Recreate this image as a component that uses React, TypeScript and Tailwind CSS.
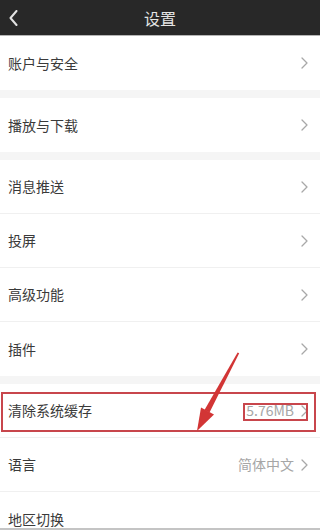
import React from 'react';

type Row = { label: string; value?: string; noArrow?: boolean };

const groups: Row[][] = [
  [{ label: '账户与安全' }],
  [{ label: '播放与下载' }],
  [{ label: '消息推送' }, { label: '投屏' }, { label: '高级功能' }, { label: '插件' }],
  [{ label: '清除系统缓存', value: '5.76MB' }, { label: '语言', value: '简体中文' }, { label: '地区切换', noArrow: true }],
];

const Chevron = () => (
  <svg width="7" height="12" viewBox="0 0 7 12" className="shrink-0">
    <path d="M1 1 L6 6 L1 11" fill="none" stroke="#a8a8a8" strokeWidth="1.3" strokeLinecap="round" strokeLinejoin="round" />
  </svg>
);

export default function App() {
  return (
    <div
      className="relative w-[320px] h-[530px] overflow-hidden bg-[#f5f5f5] border-b-2 border-[#c4c4c4]"
      style={{ fontFamily: '"Noto Sans CJK SC", "Noto Sans", sans-serif' }}
    >
      {/* Header */}
      <div className="relative h-9 bg-[#282828] border-b border-[#b5b5b5] flex items-center justify-center">
        <svg width="9" height="16" viewBox="0 0 9 16" className="absolute left-[9px] top-[10px]">
          <path d="M7.5 1 L1.5 8 L7.5 15" fill="none" stroke="#e2e2e2" strokeWidth="2" strokeLinecap="round" strokeLinejoin="round" />
        </svg>
        <span className="text-[16px] text-[#e4e4e4] leading-none">设置</span>
      </div>

      {groups.map((group, gi) => (
        <div key={gi} className={gi > 0 ? 'mt-2' : ''}>
          {group.map((row, ri) => (
            <div
              key={row.label}
              className={`relative h-[54px] bg-white flex items-center pl-2 pr-3 ${
                ri < group.length - 1 ? 'border-b border-[#f0f0f0]' : ''
              }`}
            >
              <span className="flex-1 text-[14px] text-[#3a3a3a]">{row.label}</span>
              {row.value && <span className="text-[14px] text-[#a6a6a6] mr-[7px]">{row.value}</span>}
              {!row.noArrow && <Chevron />}
              {row.label === '清除系统缓存' && (
                <>
                  <div className="absolute left-[1px] right-[4px] top-[8px] bottom-[5px] border-2 border-[#c8464c] pointer-events-none" />
                  <div className="absolute left-[243px] w-[65px] top-[19px] h-[18px] border-2 border-[#c8464c] pointer-events-none" />
                </>
              )}
            </div>
          ))}
        </div>
      ))}

      {/* Annotation arrow */}
      <svg className="absolute inset-0 pointer-events-none" width="320" height="530" viewBox="0 0 320 530">
        <polygon points="237.6,352.5 239.2,353.2 209.5,412.5 204.5,410" fill="#d23535" />
        <polygon points="197,431 201,407.5 214,414.5" fill="#d23535" />
      </svg>
    </div>
  );
}
